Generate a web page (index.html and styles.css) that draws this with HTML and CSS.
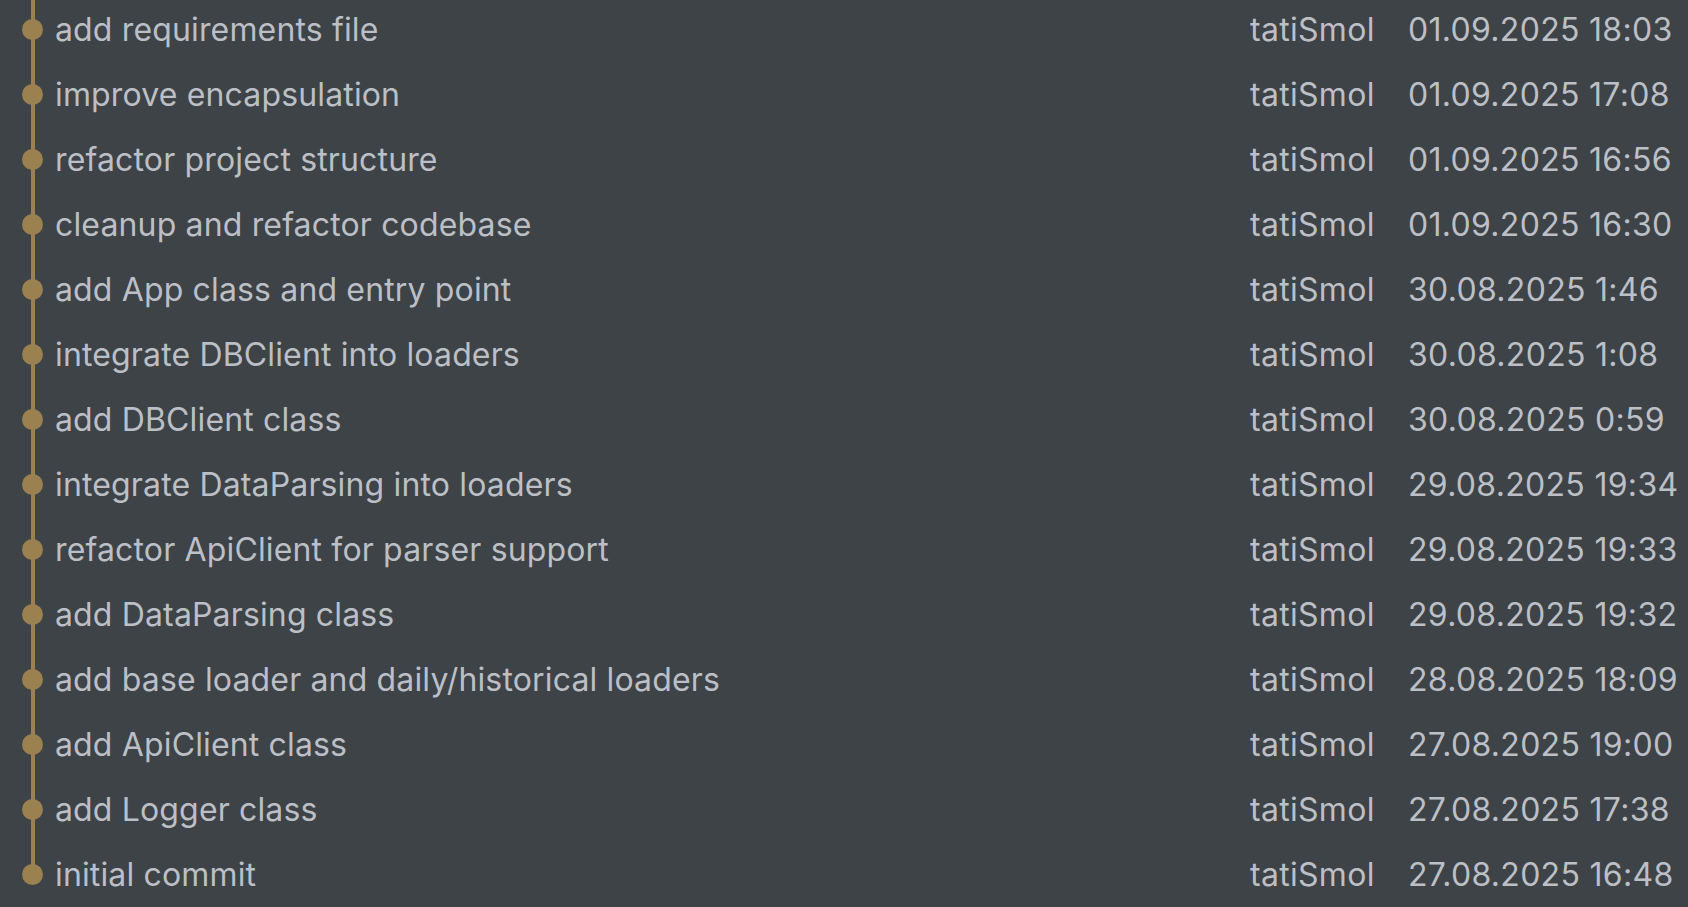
FILE: index.html
```html
<!DOCTYPE html>
<html>
<head>
<meta charset="utf-8">
<link rel="stylesheet" href="styles.css">
</head>
<body>
<div class="log">
  <div class="row"><div class="graph"><span class="dot"></span></div><div class="msg">add requirements file</div><div class="author">tatiSmol</div><div class="date">01.09.2025 18:03</div></div>
  <div class="row"><div class="graph"><span class="dot"></span></div><div class="msg">improve encapsulation</div><div class="author">tatiSmol</div><div class="date">01.09.2025 17:08</div></div>
  <div class="row"><div class="graph"><span class="dot"></span></div><div class="msg">refactor project structure</div><div class="author">tatiSmol</div><div class="date">01.09.2025 16:56</div></div>
  <div class="row"><div class="graph"><span class="dot"></span></div><div class="msg">cleanup and refactor codebase</div><div class="author">tatiSmol</div><div class="date">01.09.2025 16:30</div></div>
  <div class="row"><div class="graph"><span class="dot"></span></div><div class="msg">add App class and entry point</div><div class="author">tatiSmol</div><div class="date">30.08.2025 1:46</div></div>
  <div class="row"><div class="graph"><span class="dot"></span></div><div class="msg">integrate DBClient into loaders</div><div class="author">tatiSmol</div><div class="date">30.08.2025 1:08</div></div>
  <div class="row"><div class="graph"><span class="dot"></span></div><div class="msg">add DBClient class</div><div class="author">tatiSmol</div><div class="date">30.08.2025 0:59</div></div>
  <div class="row"><div class="graph"><span class="dot"></span></div><div class="msg">integrate DataParsing into loaders</div><div class="author">tatiSmol</div><div class="date">29.08.2025 19:34</div></div>
  <div class="row"><div class="graph"><span class="dot"></span></div><div class="msg">refactor ApiClient for parser support</div><div class="author">tatiSmol</div><div class="date">29.08.2025 19:33</div></div>
  <div class="row"><div class="graph"><span class="dot"></span></div><div class="msg">add DataParsing class</div><div class="author">tatiSmol</div><div class="date">29.08.2025 19:32</div></div>
  <div class="row"><div class="graph"><span class="dot"></span></div><div class="msg">add base loader and daily/historical loaders</div><div class="author">tatiSmol</div><div class="date">28.08.2025 18:09</div></div>
  <div class="row"><div class="graph"><span class="dot"></span></div><div class="msg">add ApiClient class</div><div class="author">tatiSmol</div><div class="date">27.08.2025 19:00</div></div>
  <div class="row"><div class="graph"><span class="dot"></span></div><div class="msg">add Logger class</div><div class="author">tatiSmol</div><div class="date">27.08.2025 17:38</div></div>
  <div class="row last"><div class="graph"><span class="dot"></span></div><div class="msg">initial commit</div><div class="author">tatiSmol</div><div class="date">27.08.2025 16:48</div></div>
</div>
</body>
</html>
```
FILE: styles.css
```css
html, body {
  margin: 0;
  padding: 0;
  background: #3d4346;
  height: 100%;
  overflow: hidden;
}
.log {
  margin-top: -3px;
  font-family: Inter, "Noto Sans", sans-serif;
  font-size: 32px;
  letter-spacing: 0.3px;
  color: #bcbfc5;
}
.row {
  display: grid;
  grid-template-columns: 55px 1fr 158px 280px;
  height: 65px;
  line-height: 65px;
  white-space: nowrap;
}
.graph {
  position: relative;
}
.graph::before {
  content: "";
  position: absolute;
  left: 31px;
  width: 4px;
  top: 0;
  bottom: 0;
  background: #9b8050;
}
.row.last .graph::before {
  bottom: 50%;
}
.dot {
  position: absolute;
  left: 22px;
  top: 22px;
  width: 21px;
  height: 21px;
  border-radius: 50%;
  background: #9b8050;
}
.msg {
  overflow: hidden;
  letter-spacing: 0.15px;
}
```
